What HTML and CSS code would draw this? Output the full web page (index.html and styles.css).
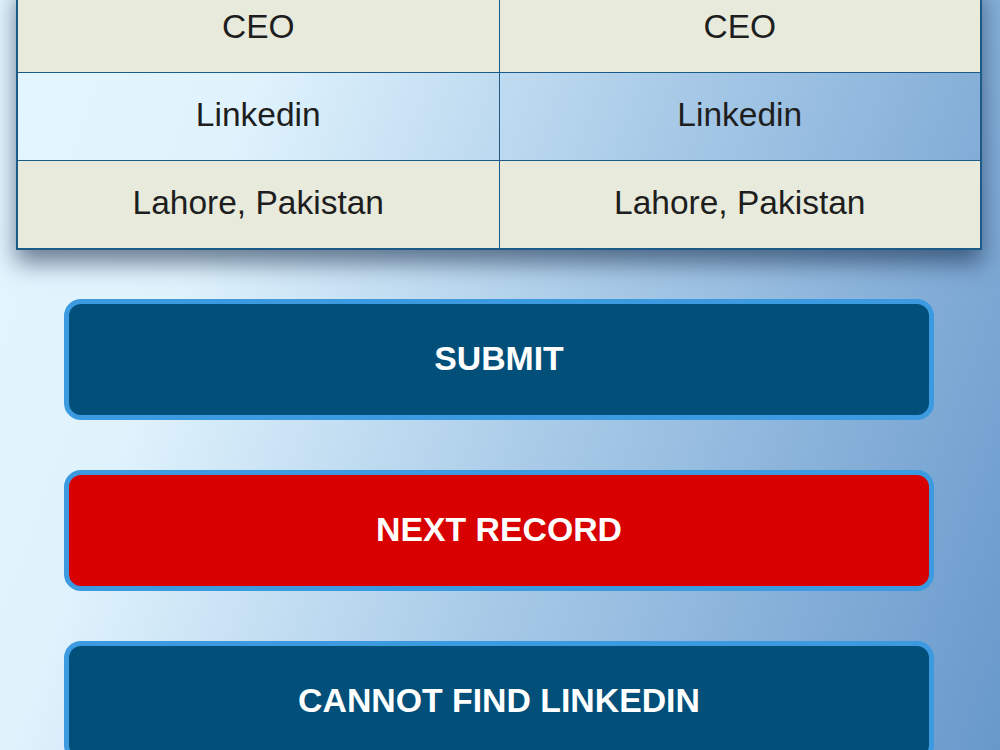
FILE: index.html
```html
<!DOCTYPE html>
<html lang="en">
<head>
<meta charset="utf-8">
<title>Record review</title>
<link rel="stylesheet" href="styles.css">
</head>
<body>
<main class="page">
  <table class="record">
    <tr class="row-light"><td>CEO</td><td>CEO</td></tr>
    <tr class="row-clear"><td>Linkedin</td><td>Linkedin</td></tr>
    <tr class="row-light"><td>Lahore, Pakistan</td><td>Lahore, Pakistan</td></tr>
  </table>
  <div class="actions">
    <button class="btn btn-primary">SUBMIT</button>
    <button class="btn btn-danger">NEXT RECORD</button>
    <button class="btn btn-primary">CANNOT FIND LINKEDIN</button>
  </div>
</main>
</body>
</html>
```
FILE: styles.css
```css
html, body {
  margin: 0;
  padding: 0;
  height: 100%;
  overflow: hidden;
}

body {
  font-family: "Liberation Sans", Arial, sans-serif;
  background: linear-gradient(110deg, #e4f6ff 0%, #e0f3fd 22%, #a9cbe8 55%, #6898cb 100%);
  background-attachment: fixed;
}

.page {
  margin-top: -17px;
}

.record {
  margin: 0 18px 0 16px;
  width: calc(100% - 34px);
  border-collapse: collapse;
  border: 2px solid #1c5a88;
  box-shadow: 0 13px 22px rgba(10, 30, 60, 0.55);
  table-layout: fixed;
}

.record td {
  height: 84px;
  padding: 0 0 3px;
  border: 1px solid #1c5a88;
  text-align: center;
  vertical-align: middle;
  font-size: 33.5px;
  color: #1e1e1e;
}

.row-light td {
  background: #e8eadc;
}

.row-clear td {
  background: transparent;
}

.actions {
  display: flex;
  flex-direction: column;
  gap: 50px;
  padding: 49px 66px 0 64px;
}

.btn {
  height: 121px;
  border: 5px solid #3b9ae0;
  border-radius: 17px;
  padding: 0 0 2px;
  font-family: "Liberation Sans", Arial, sans-serif;
  font-weight: bold;
  font-size: 33.8px;
  color: #ffffff;
  cursor: pointer;
}

.btn-primary {
  background: #02507a;
}

.btn-danger {
  background: #d80000;
}
```
